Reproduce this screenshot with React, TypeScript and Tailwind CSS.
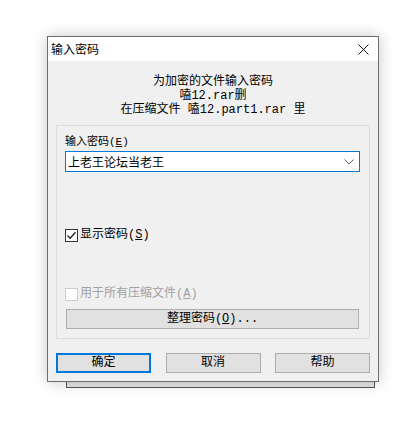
import React from 'react';

const cjk = { fontFamily: '"Liberation Mono", "Noto Sans CJK SC", monospace' };

const Btn = ({ children, primary }: { children: React.ReactNode; primary?: boolean }) => (
  <div
    className={`w-[95px] h-[20px] flex items-center justify-center text-[12px] text-black bg-[#e1e1e1] ${
      primary ? 'border-2 border-[#0078d7]' : 'border border-[#adadad]'
    }`}
  >
    {children}
  </div>
);

const Check = ({ checked, disabled }: { checked?: boolean; disabled?: boolean }) => (
  <div
    className={`w-[13px] h-[13px] border bg-white flex items-center justify-center ${
      disabled ? 'border-[#cccccc]' : 'border-[#333333]'
    }`}
  >
    {checked && (
      <svg width="11" height="11" viewBox="0 0 11 11">
        <path d="M1.5 5.5 L4.2 8.3 L9.5 2.2" fill="none" stroke="#222" strokeWidth="1.3" />
      </svg>
    )}
  </div>
);

export default function App() {
  return (
    <div className="w-[412px] h-[435px] bg-white pt-[36px] pl-[47px]" style={cjk}>
      <div className="w-[332px] h-[346px] border border-[#6e6e6e] bg-[#f0f0f0] shadow-[0_0_14px_rgba(0,0,0,0.22)] relative z-10 flex flex-col">
        <div className="h-[24px] bg-white flex items-center justify-between pl-[3px] pr-[9px]">
          <span className="text-[12px] text-black" style={{ fontFamily: '"Noto Sans CJK SC", sans-serif' }}>
            输入密码
          </span>
          <svg width="11" height="11" viewBox="0 0 11 11">
            <path d="M0.5 0.5 L10.5 10.5 M10.5 0.5 L0.5 10.5" stroke="#111" strokeWidth="1" />
          </svg>
        </div>
        <div className="flex flex-col items-center pt-[14px] text-[12px] leading-[14px] text-black">
          <span>为加密的文件输入密码</span>
          <span>嗑12.rar删</span>
          <span>在压缩文件 嗑12.part1.rar 里</span>
        </div>
        <div className="mx-[8px] mt-[8px] h-[214px] border border-[#dcdcdc] flex flex-col px-[8px] pt-[9px]">
          <span className="text-[11px] leading-[14px] text-black">
            输入密码(<span className="underline">E</span>)
          </span>
          <div className="mt-[2px] h-[21px] w-[295px] border border-[#0078d7] bg-white flex items-center justify-between pl-[2px] pr-[5px]">
            <span className="text-[12px] text-black" style={{ fontFamily: '"Noto Sans CJK SC", sans-serif' }}>
              上老王论坛当老王
            </span>
            <svg width="10" height="6" viewBox="0 0 10 6">
              <path d="M0.5 0.5 L5 5 L9.5 0.5" fill="none" stroke="#555" strokeWidth="1" />
            </svg>
          </div>
          <div className="mt-[56px] flex items-center gap-[2px]">
            <Check checked />
            <span className="text-[12px] leading-[14px] text-black">
              显示密码(<span className="underline">S</span>)
            </span>
          </div>
          <div className="mt-[45px] flex items-center gap-[2px]">
            <Check disabled />
            <span className="text-[12px] leading-[14px] text-[#a0a0a0]">
              用于所有压缩文件(<span className="underline">A</span>)
            </span>
          </div>
          <div className="mt-[8px] w-[293px] h-[20px] ml-[1px] border border-[#adadad] bg-[#e1e1e1] flex items-center justify-center text-[12px] text-black">
            整理密码(<span className="underline">O</span>)...
          </div>
        </div>
        <div className="mx-[8px] mt-[14px] flex justify-between">
          <Btn primary>确定</Btn>
          <Btn>取消</Btn>
          <Btn>帮助</Btn>
        </div>
      </div>
      <div className="ml-[19px] w-[309px] h-[6px] border-x border-b border-[#555555] bg-[#e6e6e6]" />
    </div>
  );
}
